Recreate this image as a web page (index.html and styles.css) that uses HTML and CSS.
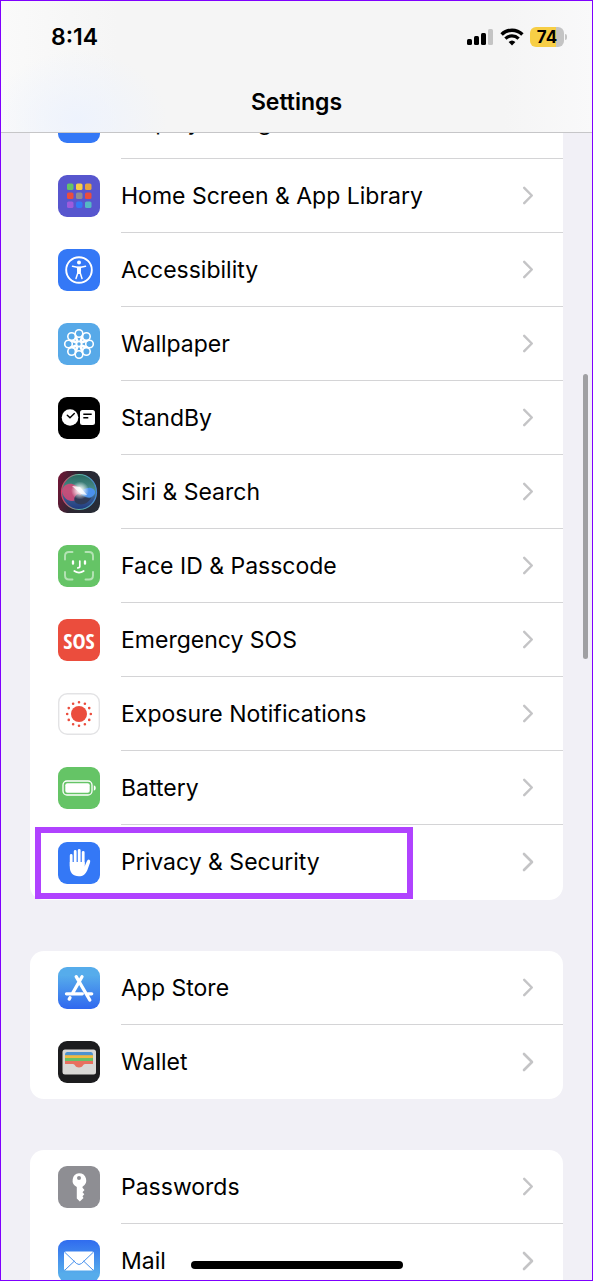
FILE: index.html
```
<!DOCTYPE html>
<html lang="en">
<head>
    <meta charset="UTF-8">
    <meta name="viewport" content="width=device-width, initial-scale=1.0">
    <title>Settings</title>
    <link rel="stylesheet" href="styles.css">
</head>
<body>
    <header class="navbar">
        <div class="status">
            <time class="clock">8:14</time>
            <div class="indicators">
                <svg class="signal" viewBox="0 0 27 18">
                    <rect x="0" y="11" width="5" height="6" rx="1.5"/>
                    <rect x="7" y="8" width="5" height="9" rx="1.5"/>
                    <rect x="14" y="5" width="5" height="12" rx="1.5"/>
                    <rect x="21" y="1" width="5" height="16" rx="1.5" fill="#c4c4c4"/>
                </svg>
                <svg class="wifi" viewBox="0 0 24 18">
                    <path d="M1.6 6.4a15 15 0 0 1 20.8 0" fill="none" stroke="#000" stroke-width="3.5"/>
                    <path d="M5.4 10.6a9.6 9.6 0 0 1 13.2 0" fill="none" stroke="#000" stroke-width="3.3"/>
                    <path d="M8.6 14a5 5 0 0 1 6.8 0L12 17.6z"/>
                </svg>
                <span class="charge">74</span>
            </div>
        </div>
        <h1>Settings</h1>
    </header>

    <main>
        <nav class="group">
            <a class="row" href="#display">
                <svg class="icon" viewBox="0 0 42 42"><rect width="42" height="42" rx="9" fill="#3478f6"/></svg>
                <span class="label">Display &amp; Brightness</span>
                <svg class="chevron" viewBox="0 0 12 20"><path d="M2 2l8 8-8 8"/></svg>
            </a>
            <a class="row" href="#home-screen">
                <svg class="icon" viewBox="0 0 42 42">
                    <rect width="42" height="42" rx="9" fill="#5756ce"/>
                    <rect x="9" y="8.500" width="6.500" height="6.500" rx="1.600" fill="#65c466"/>
                    <rect x="18" y="8.500" width="6.500" height="6.500" rx="1.600" fill="#f7ce45"/>
                    <rect x="27" y="8.500" width="6.500" height="6.500" rx="1.600" fill="#e8a33d"/>
                    <rect x="9" y="17.500" width="6.500" height="6.500" rx="1.600" fill="#eb4d3d"/>
                    <rect x="18" y="17.500" width="6.500" height="6.500" rx="1.600" fill="#8e8e93"/>
                    <rect x="27" y="17.500" width="6.500" height="6.500" rx="1.600" fill="#eb4d3d"/>
                    <rect x="9" y="26.500" width="6.500" height="6.500" rx="1.600" fill="#9d5bdc"/>
                    <rect x="18" y="26.500" width="6.500" height="6.500" rx="2" fill="#3478f6"/>
                    <rect x="27" y="26.500" width="6.500" height="6.500" rx="1.600" fill="#55b9c4"/>
                </svg>
                <span class="label">Home Screen &amp; App Library</span>
                <svg class="chevron" viewBox="0 0 12 20"><path d="M2 2l8 8-8 8"/></svg>
            </a>
            <a class="row" href="#accessibility">
                <svg class="icon" viewBox="0 0 42 42">
                    <rect width="42" height="42" rx="9" fill="#3478f6"/>
                    <circle cx="21" cy="21" r="12.800" fill="none" stroke="#fff" stroke-width="1.900"/>
                    <circle cx="21" cy="13.600" r="2" fill="#fff"/>
                    <path d="M14.500 17.300l4.700.9h3.600l4.700-.9M19.800 24l-1.800 5.500M22.200 24l1.800 5.500" fill="none" stroke="#fff" stroke-width="1.500" stroke-linecap="round"/>
                    <path d="M18.900 17.700h4.200l-.2 7.300h-3.800z" fill="#fff"/>
                </svg>
                <span class="label">Accessibility</span>
                <svg class="chevron" viewBox="0 0 12 20"><path d="M2 2l8 8-8 8"/></svg>
            </a>
            <a class="row" href="#wallpaper">
                <svg class="icon" viewBox="0 0 42 42">
                    <rect width="42" height="42" rx="9" fill="#57a9e8"/>
                    <g fill="none" stroke="#fff" stroke-width="1.600">
                        <circle cx="21" cy="10.500" r="3.800"/>
                        <circle cx="28.400" cy="13.600" r="3.800"/>
                        <circle cx="31.500" cy="21" r="3.800"/>
                        <circle cx="28.400" cy="28.400" r="3.800"/>
                        <circle cx="21" cy="31.500" r="3.800"/>
                        <circle cx="13.600" cy="28.400" r="3.800"/>
                        <circle cx="10.500" cy="21" r="3.800"/>
                        <circle cx="13.600" cy="13.600" r="3.800"/>
                        <circle cx="21" cy="21" r="2.500"/>
                        <path d="M17.500 12l2.500 6.300M24.500 12L22 18.300M24.800 14.900l-2.100 3.800M27.100 17.200l-3.800 2.100M30 17.500L23.700 20M30 24.500L23.700 22M27.100 24.800l-3.800-2.100M24.800 27.100l-2.100-3.800M24.500 30L22 23.700M17.500 30l2.500-6.300M17.200 27.100l2.100-3.800M14.900 24.800l3.800-2.100M12 24.500l6.300-2.500M12 17.500l6.300 2.500M14.900 17.200l3.800 2.100M17.200 14.900l2.100 3.800"/>
                    </g>
                </svg>
                <span class="label">Wallpaper</span>
                <svg class="chevron" viewBox="0 0 12 20"><path d="M2 2l8 8-8 8"/></svg>
            </a>
            <a class="row" href="#standby">
                <svg class="icon" viewBox="0 0 42 42">
                    <rect width="42" height="42" rx="9"/>
                    <circle cx="12" cy="20.500" r="8.300" fill="#fff"/>
                    <path d="M9.300 18.200l2.700 2.600 4.300-4.200" fill="none" stroke="#000" stroke-width="1.400" stroke-linecap="round"/>
                    <rect x="22" y="13" width="15" height="15" rx="2.500" fill="#fff"/>
                    <path d="M25.300 17.300h8.400M25.300 20.800h5" stroke="#000" stroke-width="1.400"/>
                </svg>
                <span class="label">StandBy</span>
                <svg class="chevron" viewBox="0 0 12 20"><path d="M2 2l8 8-8 8"/></svg>
            </a>
            <a class="row" href="#siri">
                <svg class="icon" viewBox="0 0 42 42">
                    <defs>
                        <linearGradient id="siri-bg" x1="0" y1="0.300" x2="1" y2="0.500">
                            <stop offset="0" stop-color="#6d1735"/>
                            <stop offset=".4" stop-color="#2c2632"/>
                            <stop offset="1" stop-color="#262c36"/>
                        </linearGradient>
                        <linearGradient id="siri-orb" x1=".5" y1="0" x2=".5" y2="1">
                            <stop offset="0" stop-color="#29685f"/>
                            <stop offset=".45" stop-color="#4b8f8c"/>
                            <stop offset=".7" stop-color="#35568d"/>
                            <stop offset="1" stop-color="#203b80"/>
                        </linearGradient>
                        <linearGradient id="siri-ring" x1="0" y1=".5" x2="1" y2=".5">
                            <stop offset="0" stop-color="#d63d66"/>
                            <stop offset=".5" stop-color="#5eb69c"/>
                            <stop offset="1" stop-color="#4789d8"/>
                        </linearGradient>
                        <radialGradient id="siri-glow">
                            <stop offset="0" stop-color="#fff"/>
                            <stop offset=".3" stop-color="#fff" stop-opacity=".8"/>
                            <stop offset="1" stop-color="#fff" stop-opacity="0"/>
                        </radialGradient>
                    </defs>
                    <rect width="42" height="42" rx="9" fill="url(#siri-bg)"/>
                    <circle cx="21" cy="21" r="17.500" fill="url(#siri-orb)" stroke="url(#siri-ring)" stroke-width="1.200"/>
                    <path d="M4 20c2-9 13-10 18 0 3 5-2 10-8 10-5 0-9-4-10-10z" fill="#cf4a78" opacity=".9"/>
                    <path d="M20 20c5 0 8-4 13-3 4 1 6 5 2 8-5 4-11-1-15-5z" fill="#4b91ec"/>
                    <path d="M20 23c4 1 8 5 13 4-3 6-10 8-15 5-3-3-2-7 2-9z" fill="#303b58"/>
                    <circle cx="22" cy="19.500" r="9" fill="url(#siri-glow)"/>
                    <path d="M14 15l8 1 7 8-6-1z" fill="#fff" opacity=".8"/>
                </svg>
                <span class="label">Siri &amp; Search</span>
                <svg class="chevron" viewBox="0 0 12 20"><path d="M2 2l8 8-8 8"/></svg>
            </a>
            <a class="row" href="#face-id">
                <svg class="icon" viewBox="0 0 42 42">
                    <rect width="42" height="42" rx="9" fill="#65c466"/>
                    <path d="M7 14.500V11q0-4 4-4h3.500M27.500 7H31q4 0 4 4v3.500M35 27v3.500q0 4-4 4h-3.500M14.500 34.500H11q-4 0-4-4V27" fill="none" stroke="#b5e3b5" stroke-width="1.900" stroke-linecap="round"/>
                    <path d="M15 16.500v2.200M27 16.500v2.200" stroke="#fff" stroke-width="2.300" stroke-linecap="round"/>
                    <path d="M21.800 16v5.600q0 1.300-2 1.300M16.300 26q4.700 3.300 9.400 0" fill="none" stroke="#fff" stroke-width="1.700" stroke-linecap="round"/>
                </svg>
                <span class="label">Face ID &amp; Passcode</span>
                <svg class="chevron" viewBox="0 0 12 20"><path d="M2 2l8 8-8 8"/></svg>
            </a>
            <a class="row" href="#sos">
                <span class="icon sos">SOS</span>
                <span class="label">Emergency SOS</span>
                <svg class="chevron" viewBox="0 0 12 20"><path d="M2 2l8 8-8 8"/></svg>
            </a>
            <a class="row" href="#exposure">
                <svg class="icon" viewBox="0 0 42 42">
                    <rect x=".7" y=".7" width="40.600" height="40.600" rx="8.500" fill="#fff" stroke="#e3e3e5" stroke-width="1.400"/>
                    <circle cx="21" cy="21" r="8" fill="#eb4d3d"/>
                    <circle cx="21" cy="21" r="11.800" fill="none" stroke="#eb4d3d" stroke-width="2.600" stroke-linecap="round" pathLength="120" stroke-dasharray="0 10"/>
                </svg>
                <span class="label">Exposure Notifications</span>
                <svg class="chevron" viewBox="0 0 12 20"><path d="M2 2l8 8-8 8"/></svg>
            </a>
            <a class="row" href="#battery">
                <svg class="icon" viewBox="0 0 42 42">
                    <rect width="42" height="42" rx="9" fill="#65c466"/>
                    <rect x="5" y="14" width="29" height="14" rx="4" fill="none" stroke="#fff" stroke-width="1.300"/>
                    <rect x="7.300" y="16.200" width="24.400" height="9.600" rx="2" fill="#fff"/>
                    <path d="M35.800 18.300q2 .7 2 2.700t-2 2.700z" fill="#fff"/>
                </svg>
                <span class="label">Battery</span>
                <svg class="chevron" viewBox="0 0 12 20"><path d="M2 2l8 8-8 8"/></svg>
            </a>
            <a class="row highlight" href="#privacy">
                <svg class="icon" viewBox="0 0 42 42">
                    <rect width="42" height="42" rx="9" fill="#3478f6"/>
                    <path d="M13.200 13.500V24M17.200 9.500V22M21.200 8.300V22M25.200 10.300V23" stroke="#fff" stroke-width="2.800" stroke-linecap="round"/>
                    <path d="M11.800 20h14.800v4.500l2-4.800q1.200-2.700 2.700-2 1.500.6.700 3l-2.700 7.500C27.600 32 25.300 34.300 20.800 34.300c-6 0-9-3.800-9-9.300z" fill="#fff"/>
                </svg>
                <span class="label">Privacy &amp; Security</span>
                <svg class="chevron" viewBox="0 0 12 20"><path d="M2 2l8 8-8 8"/></svg>
            </a>
        </nav>

        <nav class="group">
            <a class="row" href="#app-store">
                <svg class="icon" viewBox="0 0 42 42">
                    <defs>
                        <linearGradient id="store-bg" x1="0" y1="0" x2="0" y2="1">
                            <stop offset=".2" stop-color="#56aceb"/>
                            <stop offset="1" stop-color="#3068ef"/>
                        </linearGradient>
                    </defs>
                    <rect width="42" height="42" rx="9" fill="url(#store-bg)"/>
                    <path d="M24 9.700L14.700 26M12 30.700l-.8 1.400M18.200 9.700L31.800 33M8.500 26.800h15.800M30 26.800h3.700" fill="none" stroke="#fff" stroke-width="3.300" stroke-linecap="round"/>
                </svg>
                <span class="label">App Store</span>
                <svg class="chevron" viewBox="0 0 12 20"><path d="M2 2l8 8-8 8"/></svg>
            </a>
            <a class="row" href="#wallet">
                <svg class="icon" viewBox="0 0 42 42">
                    <rect width="42" height="42" rx="9" fill="#1c1c1e"/>
                    <rect x="4.500" y="8.500" width="33.500" height="25" rx="2.500" fill="#d9d8d6"/>
                    <path d="M7 13.500q0-2.500 2-2.500h24q2 0 2 2.500V16H7z" fill="#4e93cf"/>
                    <path d="M7 14.200h28v4H7z" fill="#f2b93f"/>
                    <path d="M7 17h28v4H7z" fill="#68c067"/>
                    <path d="M7 20h28v3h-8c-2 0-2 3.500-6 3.500S17 23 15 23H7z" fill="#e8705f"/>
                </svg>
                <span class="label">Wallet</span>
                <svg class="chevron" viewBox="0 0 12 20"><path d="M2 2l8 8-8 8"/></svg>
            </a>
        </nav>

        <nav class="group">
            <a class="row" href="#passwords">
                <svg class="icon" viewBox="0 0 42 42">
                    <rect width="42" height="42" rx="9" fill="#8e8e93"/>
                    <path fill-rule="evenodd" d="M21 7.200a7.200 7.200 0 0 1 3.500 13.500v1.100l2 2.200-2 2.300 1.800 2-1.800 2 1 1.800-3.700 3.500-3-3V20.900A7.200 7.200 0 0 1 21 7.200zm0 2.800a2 2 0 1 0 0 4 2 2 0 0 0 0-4z" fill="#fff"/>
                </svg>
                <span class="label">Passwords</span>
                <svg class="chevron" viewBox="0 0 12 20"><path d="M2 2l8 8-8 8"/></svg>
            </a>
            <a class="row" href="#mail">
                <svg class="icon" viewBox="0 0 42 42">
                    <defs>
                        <linearGradient id="mail-bg" x1="0" y1="0" x2="0" y2="1">
                            <stop offset="0" stop-color="#306cef"/>
                            <stop offset=".8" stop-color="#56aceb"/>
                        </linearGradient>
                    </defs>
                    <rect width="42" height="42" rx="9" fill="url(#mail-bg)"/>
                    <rect x="6" y="11.500" width="30" height="19" rx="2" fill="#fff"/>
                    <path d="M7 12.500l11.500 11q2.500 2 5 0l11.500-11M7 30l9.500-9M35 30l-9.500-9" fill="none" stroke="#4791ee" stroke-width="1"/>
                </svg>
                <span class="label">Mail</span>
                <svg class="chevron" viewBox="0 0 12 20"><path d="M2 2l8 8-8 8"/></svg>
            </a>
        </nav>
    </main>

    <div class="scrollbar"></div>
    <div class="home-indicator"></div>
    <div class="frame"></div>
</body>
</html>
```
FILE: styles.css
```
* {
    box-sizing: border-box;
}
body {
    margin: 0;
    height: 100vh;
    overflow: hidden;
    background: #f1f0f6;
    color: #000;
    font-family: Inter, "Liberation Sans", sans-serif;
}
.navbar {
    position: fixed;
    top: 0;
    left: 0;
    right: 0;
    z-index: 1;
    padding-top: 23px;
    border-bottom: 1px solid #c6c6c8;
    background:
        radial-gradient(ellipse 90px 70px at 78px 120px, #eef3fd, transparent),
        linear-gradient(90deg, #fafafa, #f5f5f5 20%, #f5f5f5 85%, #f9f9fa);
}
.status {
    display: flex;
    justify-content: space-between;
    align-items: center;
    height: 28px;
    padding: 0 25px 0 51px;
}
.clock {
    font-size: 23px;
    font-weight: 600;
}
.indicators {
    display: flex;
    align-items: center;
    gap: 6px;
}
.signal {
    width: 27px;
    height: 18px;
}
.wifi {
    width: 24px;
    height: 18px;
}
.charge {
    position: relative;
    width: 34px;
    margin-right: 4px;
    border-radius: 6px;
    background: linear-gradient(90deg, #f7ce45 77%, #c4c4c4 77%);
    font-size: 17px;
    font-weight: 700;
    line-height: 20px;
    text-align: center;
}
.charge::after {
    content: "";
    position: absolute;
    top: 7px;
    right: -3px;
    width: 2px;
    height: 6px;
    border-radius: 0 2px 2px 0;
    background: #c4c4c4;
}
h1 {
    margin: 0;
    padding: 38px 0 17px;
    font-size: 23px;
    font-weight: 600;
    line-height: 26px;
    text-align: center;
}
main {
    display: flex;
    flex-direction: column;
    gap: 51px;
    padding: 85px 30px 0;
}
.group {
    border-radius: 14px;
    background: #fff;
}
.row {
    position: relative;
    display: flex;
    align-items: center;
    height: 74px;
    padding-left: 28px;
    color: inherit;
    text-decoration: none;
}
.icon {
    flex: none;
    width: 42px;
    height: 42px;
    margin-right: 21px;
}
.sos {
    border-radius: 9px;
    background: #eb4d3d;
    color: #fff;
    font-family: "Liberation Sans Narrow", "Open Sans Condensed", "DejaVu Sans Condensed", sans-serif;
    font-size: 22px;
    font-weight: 700;
    line-height: 42px;
    text-align: center;
}
.label {
    flex: 1;
    align-self: stretch;
    border-bottom: 1px solid #d4d4d6;
    font-size: 23px;
    line-height: 74px;
    white-space: nowrap;
}
.chevron {
    align-self: stretch;
    width: 41px;
    height: 74px;
    padding: 27px 29px 27px 0;
    border-bottom: 1px solid #d4d4d6;
}
.chevron path {
    fill: none;
    stroke: #c4c4c6;
    stroke-width: 2.6;
    stroke-linecap: round;
    stroke-linejoin: round;
}
.row:last-child .label,
.row:last-child .chevron {
    border-bottom: 0;
}
.highlight {
    height: 75px;
}
.highlight::after {
    content: "";
    position: absolute;
    top: 2px;
    bottom: 1px;
    left: 5px;
    right: 150px;
    border: 6px solid #b042ff;
}
.scrollbar {
    position: fixed;
    top: 374px;
    right: 5px;
    width: 5px;
    height: 285px;
    border-radius: 3px;
    background: #a0a0a3;
}
.home-indicator {
    position: fixed;
    bottom: 12px;
    left: 50%;
    width: 212px;
    height: 8px;
    margin-left: -106px;
    border-radius: 4px;
    background: #000;
}
.frame {
    position: fixed;
    inset: 0;
    z-index: 2;
    border: 1px solid #7f00ff;
    pointer-events: none;
}
```
